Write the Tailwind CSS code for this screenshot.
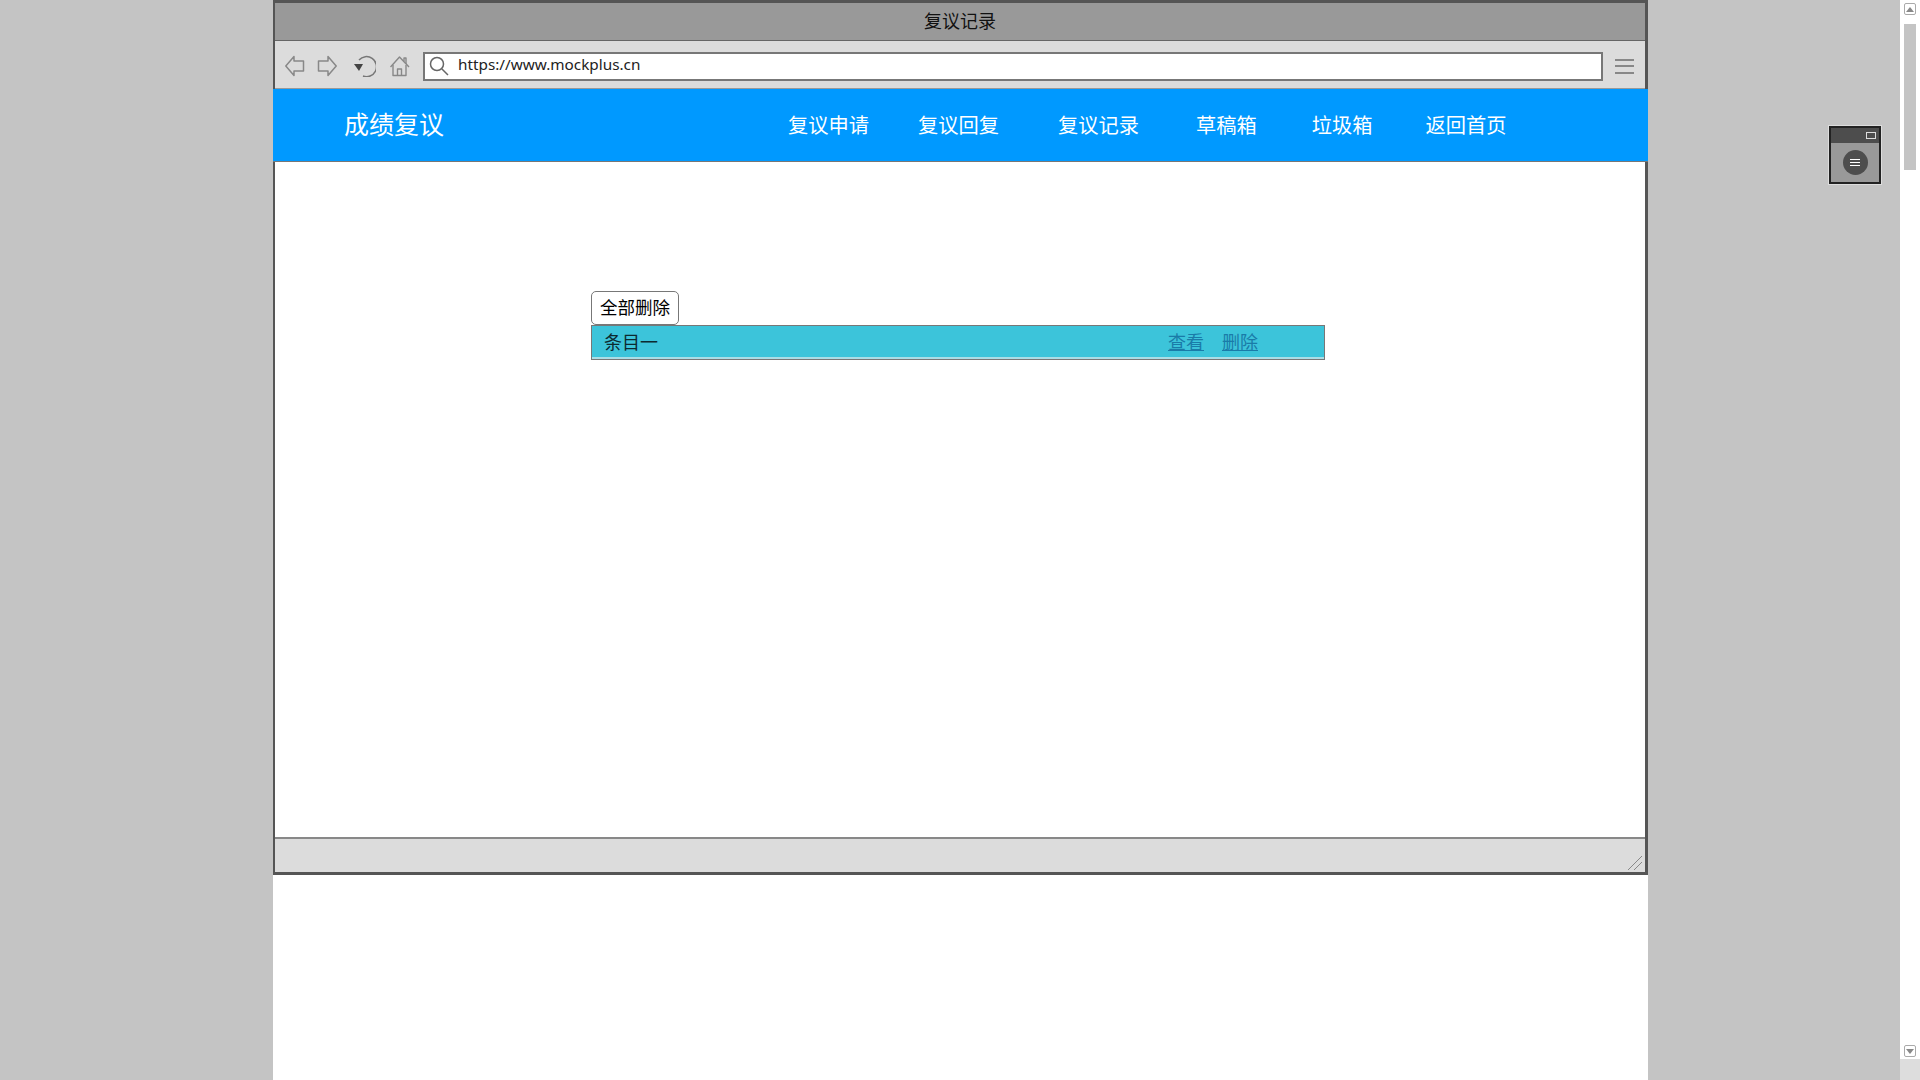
<!DOCTYPE html>
<html lang="en">
<head>
    <meta charset="UTF-8">
    <title>复议记录</title>
    <script src="https://cdn.jsdelivr.net/npm/@tailwindcss/browser@4"></script>
</head>
<body class="h-screen overflow-hidden bg-[#c4c4c4] font-['Noto_Sans','Noto_Sans_CJK_SC',sans-serif] text-black">
<div class="flex h-[1080px]">
    <div class="w-[273px] shrink-0"></div>

    <!-- page column -->
    <div class="w-[1375px] shrink-0 bg-white">
        <div class="h-[875px] flex flex-col border-l-2 border-r-[3px] border-y-[3px] border-[#555555] box-border">
            <div class="h-[38px] shrink-0 bg-[#999999] border-b border-[#666666] flex items-center justify-center pb-[2px] text-[18px] leading-none text-[#111111]">复议记录</div>

            <div class="h-[48px] shrink-0 bg-[#dcdcdc] border-b border-[#999999] flex items-center pl-[10px] pt-[3px]">
                <svg class="w-[20px] h-[22px]" viewBox="0 0 20 22" fill="none" stroke="#888888" stroke-width="1.5" stroke-linejoin="round"><path d="M.8 11 9 1.5V6H18.5V16H9V20.5Z"/></svg>
                <svg class="w-[20px] h-[22px] ml-[12px]" viewBox="0 0 20 22" fill="none" stroke="#888888" stroke-width="1.5" stroke-linejoin="round"><path d="M19.2 11 11 1.5V6H1.5V16H11V20.5Z"/></svg>
                <svg class="w-[24px] h-[22px] ml-[15px]" viewBox="0 0 24 22" fill="none" stroke="#777777" stroke-width="1.5"><path d="M7 5A10 10 0 1 1 11 21"/><path d="M2 9H11L7 16Z" fill="#444444" stroke="none"/></svg>
                <svg class="w-[20px] h-[22px] ml-[14px]" viewBox="0 0 20 22" fill="none" stroke="#888888" stroke-width="1.4" stroke-linejoin="round"><path d="M.5 12 9.5 2 19 12"/><path d="M14 6.5V3H16V9"/><path d="M3 10V20.5H16V10"/><path d="M7.5 20V14H11.5V20"/></svg>
                <div class="w-[1180px] h-[29px] ml-[13px] bg-white border-2 border-[#777777] flex items-center">
                    <svg class="w-[20px] h-[20px] ml-[4px] shrink-0" viewBox="0 0 20 20" fill="none" stroke="#666666" stroke-width="1.5"><circle cx="8" cy="8" r="6.5"/><path d="M13 13 19 19"/></svg>
                    <span class="ml-[9px] text-[15.3px] leading-none text-[#222222] relative -top-px">https://www.mockplus.cn</span>
                </div>
                <div class="ml-[12px] w-[19px] flex flex-col gap-[4.5px]">
                    <div class="h-[2px] bg-[#888888]"></div>
                    <div class="h-[2px] bg-[#888888]"></div>
                    <div class="h-[2px] bg-[#888888]"></div>
                </div>
            </div>

            <div class="h-[73px] shrink-0 -ml-[2px] -mr-[3px] bg-[#0099ff] border-b border-[#777777] flex items-center text-white">
                <span class="ml-[71px] w-[444px] -mt-[1px] text-[25px] leading-none shrink-0">成绩复议</span>
                <nav class="flex mt-[1px] text-[20.25px] leading-none">
                    <a>复议申请</a>
                    <a class="ml-[49px]">复议回复</a>
                    <a class="ml-[59px]">复议记录</a>
                    <a class="ml-[57px]">草稿箱</a>
                    <a class="ml-[55px]">垃圾箱</a>
                    <a class="ml-[53px]">返回首页</a>
                </nav>
            </div>

            <div class="flex-1 bg-white pt-[129px] pl-[316px]">
                <button class="block w-[88px] h-[34px] bg-white border border-[#777777] rounded-[5px] text-[17.5px] leading-none">全部删除</button>
                <div class="w-[734px] h-[35px] bg-[#3cc4da] border border-[#777777]">
                    <div class="h-full border-b-2 border-[#a9dde6] flex items-center text-[18px] leading-none">
                        <span class="ml-[12px] w-[564px] text-[#0c2a30]">条目一</span>
                        <a class="text-[#1a7ba8] underline">查看</a>
                        <a class="ml-[18px] text-[#1a7ba8] underline">删除</a>
                    </div>
                </div>
            </div>

            <div class="h-[35px] shrink-0 bg-[#dcdcdc] border-t-2 border-[#888888] flex justify-end items-end pr-[2px] pb-[2px]">
                <svg class="w-[15px] h-[15px]" viewBox="0 0 15 15" fill="none" stroke="#888888" stroke-width="1"><path d="M0 15 14 1M6 15 14 7"/></svg>
            </div>
        </div>
    </div>

    <!-- right gutter with the floating widget -->
    <div class="flex-1 relative">
        <div class="absolute left-[181px] top-[126px] w-[52px] h-[58px] border-2 border-[#222222] outline outline-[#dddddd] bg-[#999999]">
            <div class="h-[15px] bg-[#4d4d4d] flex justify-end items-center pr-[3px]">
                <div class="w-[10px] h-[7px] border border-[#dddddd]"></div>
            </div>
            <div class="w-[25px] h-[25px] rounded-full bg-[#4d4d4d] mx-auto mt-[7px] flex flex-col justify-center items-center gap-[2px]">
                <div class="w-[10px] h-px bg-white"></div>
                <div class="w-[10px] h-px bg-white"></div>
                <div class="w-[10px] h-px bg-white"></div>
            </div>
        </div>
    </div>

    <!-- scrollbar -->
    <div class="w-[20px] shrink-0 flex flex-col bg-[#dddddd]">
        <div class="h-[1059px] bg-white flex flex-col items-center pt-[3px]">
            <div class="w-[12px] h-[12px] border border-[#aaaaaa] rounded-[2px] flex items-center justify-center">
                <svg class="w-[8px] h-[5px]" viewBox="0 0 8 5"><path d="M4 0 8 5H0Z" fill="#888888"/></svg>
            </div>
            <div class="w-[12px] h-[146px] mt-[9px] bg-[#c4c4c4]"></div>
            <div class="mt-auto mb-[2px] w-[12px] h-[12px] border border-[#aaaaaa] rounded-[2px] flex items-center justify-center">
                <svg class="w-[8px] h-[5px]" viewBox="0 0 8 5"><path d="M4 5 8 0H0Z" fill="#888888"/></svg>
            </div>
        </div>
    </div>
</div>
</body>
</html>
